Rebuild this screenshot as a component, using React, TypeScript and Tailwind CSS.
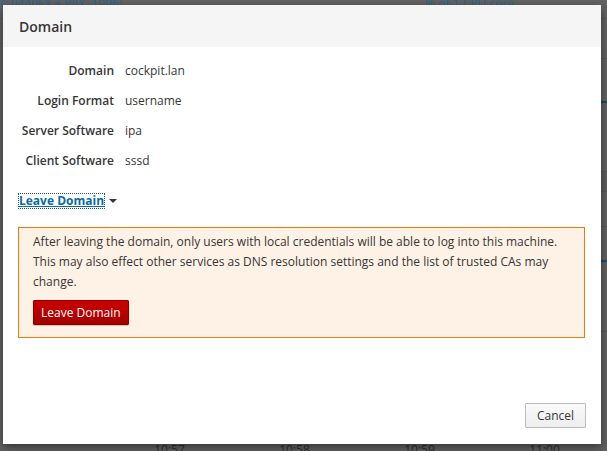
import React from "react";

const rows = [
  ["Domain", "cockpit.lan"],
  ["Login Format", "username"],
  ["Server Software", "ipa"],
  ["Client Software", "sssd"],
];

const App = () => {
  return (
    <div className="relative w-[607px] h-[451px] overflow-hidden bg-[#636363] font-['Open_Sans',sans-serif] text-[12px]">
      {/* page behind the backdrop */}
      <div className="flex flex-col w-full h-full">
        <div className="flex h-[22px] border-b border-[#5a5a5a] text-[#2a6796] text-[12px] leading-[14px] -mt-[3px]">
          <span className="w-[425px]">C (i440FX + PIIX, 1996)</span>
          <span>% of 1 CPU core</span>
        </div>
        <div className="flex flex-col ml-auto w-[320px]">
          <div className="h-[40px] border-b border-[#575757]" />
          <div className="h-[44px] border-b-2 border-[#1c4a6a]" />
          <div className="h-[69px] border-b border-[#575757]" />
          <div className="h-[20px] bg-[#5e5e5e] border-b border-[#575757]" />
          <div className="h-[35px] border-b border-[#575757]" />
          <div className="h-[35px] border-b-2 border-[#1c4a6a]" />
          <div className="h-[70px] border-b border-[#575757]" />
        </div>
        <div className="mt-auto flex h-[8px] text-[#2e2e2e] leading-[14px]">
          <span className="w-[130px] ml-[107px] text-center">10:57</span>
          <span className="w-[130px] text-center">10:58</span>
          <span className="w-[130px] text-center">10:59</span>
          <span className="w-[130px] text-center">11:00</span>
        </div>
      </div>

      {/* dialog */}
      <div className="absolute left-[3px] top-[5px] w-[598px] h-[439px] bg-white shadow-[0_3px_9px_rgba(0,0,0,0.5)] flex flex-col text-[#363636]">
        <div className="h-[42px] bg-[#f5f5f5] flex items-center px-[16px]">
          <h4 className="text-[14px] font-semibold text-[#363636]">Domain</h4>
        </div>
        <div className="flex-1 flex flex-col pl-[15px] pr-[16px] pt-[9px]">
          {rows.map(([label, value]) => (
            <div key={label} className="flex items-center h-[30px]">
              <span className="w-[96px] text-right font-semibold">{label}</span>
              <span className="ml-[11px]">{value}</span>
            </div>
          ))}
          <div className="flex items-center h-[20px] mt-[15px] pl-[1px]">
            <a className="font-bold text-[#0a6aa1] underline outline-1 outline-dotted outline-[#1a5a8a] leading-[14px]">
              Leave Domain
            </a>
            <span className="ml-[5px] w-0 h-0 border-l-[4px] border-r-[4px] border-t-[4px] border-l-transparent border-r-transparent border-t-[#363636]" />
          </div>
          <div className="mt-[16px] border border-[#ec7a08] bg-[#fdf2e5] pl-[14px] pr-[14px] pt-[4px] pb-[12px]">
            <p className="leading-[20px]">
              After leaving the domain, only users with local credentials will be able to log into this machine.
              This may also effect other services as DNS resolution settings and the list of trusted CAs may
              change.
            </p>
            <button className="mt-[8px] h-[25px] px-[7px] text-white bg-gradient-to-b from-[#cc0000] to-[#a30000] border border-[#8b0000] rounded-[1px] shadow-[0_1px_1px_rgba(0,0,0,0.2)]">
              Leave Domain
            </button>
          </div>
        </div>
        <div className="flex justify-end px-[15px] pb-[16px]">
          <button className="h-[25px] w-[61px] text-[#363636] bg-gradient-to-b from-[#fafafa] to-[#ededed] border border-[#bbbbbb] rounded-[1px]">
            Cancel
          </button>
        </div>
      </div>
    </div>
  );
};

export default App;
